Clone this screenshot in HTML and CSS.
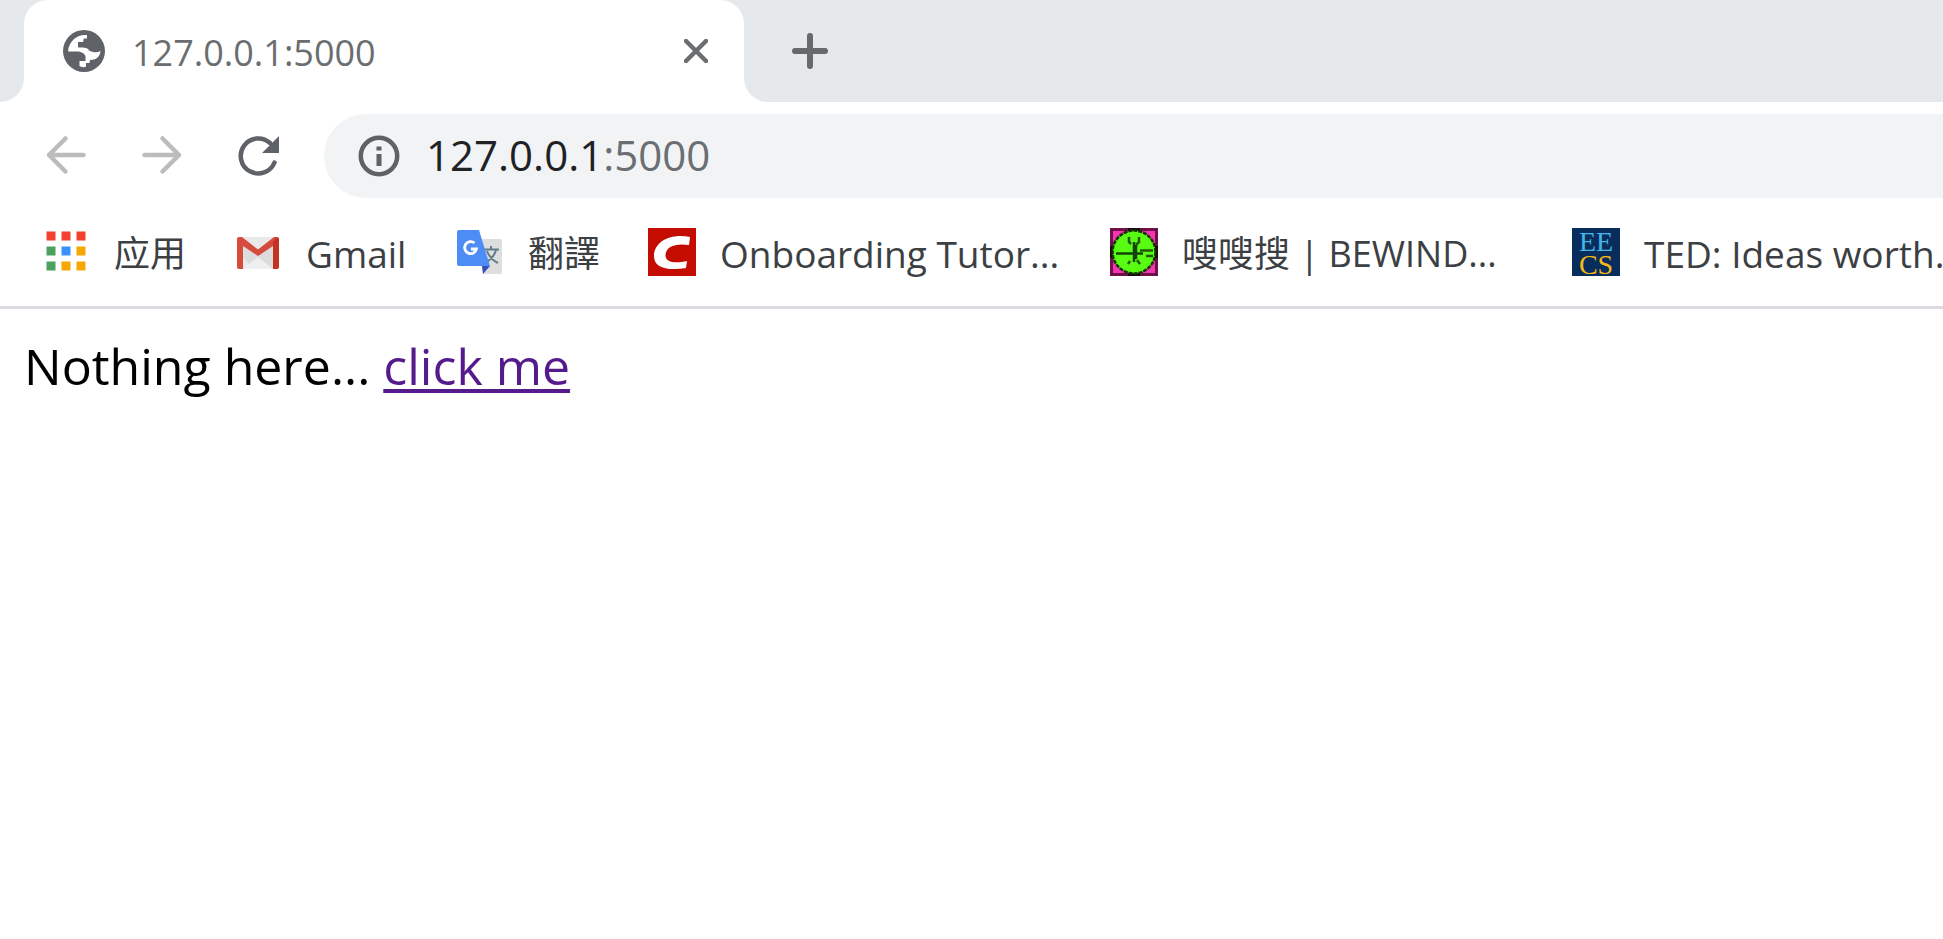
FILE: index.html
```html
<!DOCTYPE html>
<html lang="zh">
<head>
<meta charset="utf-8">
<title>127.0.0.1:5000</title>
<link rel="stylesheet" href="styles.css">
</head>
<body>
<header class="browser">
  <div class="tabstrip">
    <div class="strip-edge"></div>
    <div class="tab">
      <svg class="tab-icon" viewBox="0 0 42 42" aria-hidden="true">
        <circle cx="21" cy="21" r="21" fill="#5f6368"/>
        <path d="M24 5C15 4 6 10 5 21.500H14C19 21.500 22 24 22.500 26.500V31H16.500V36C18 37.500 22 37.500 23 36.500V33H25.500C27 33 27 31 27 30C33 30 37 27 37.500 21C34 23 30 22.500 26 20.500C25.500 18 22 17.500 15 17.500V12H19.500C21 12 20 9 21 8.500H24Z" fill="#fff"/>
      </svg>
      <span class="tab-title">127.0.0.1:5000</span>
      <button class="icon-button" aria-label="Close tab">
        <svg class="close-icon" viewBox="0 0 24 24"><path d="M2 2 22 22M22 2 2 22" stroke="#6b6e70" stroke-width="4.5" stroke-linecap="round"/></svg>
      </button>
    </div>
    <div class="strip-rest">
      <button class="icon-button" aria-label="New tab">
        <svg class="plus-icon" viewBox="0 0 36 36"><path d="M18 3V33M3 18H33" stroke="#666a6d" stroke-width="6" stroke-linecap="round"/></svg>
      </button>
    </div>
  </div>

  <div class="toolbar">
    <nav class="nav-buttons">
      <button class="icon-button" aria-label="Back" disabled>
        <svg class="nav-icon" viewBox="0 0 42 42"><path d="M38.500 20H4M20.500 3.500 4 20 20.500 36.500" fill="none" stroke="#babcbe" stroke-width="4.500" stroke-linecap="round" stroke-linejoin="round"/></svg>
      </button>
      <button class="icon-button" aria-label="Forward" disabled>
        <svg class="nav-icon" viewBox="0 0 42 42"><path d="M3.500 20H38M21.500 3.500 38 20 21.500 36.500" fill="none" stroke="#babcbe" stroke-width="4.500" stroke-linecap="round" stroke-linejoin="round"/></svg>
      </button>
      <button class="icon-button" aria-label="Reload">
        <svg class="nav-icon" viewBox="0 0 42 42"><path d="M37.500 27.500A17.500 17.500 0 1 1 33 8" fill="none" stroke="#5f6368" stroke-width="4.500" stroke-linecap="round"/><path d="M42 1V18H25Z" fill="#5f6368"/></svg>
      </button>
    </nav>
    <div class="omnibox">
      <button class="icon-button" aria-label="Site information">
        <svg class="info-icon" viewBox="0 0 42 42"><circle cx="21" cy="21" r="18.200" fill="none" stroke="#5f6163" stroke-width="4.500"/><path d="M18.500 11.500h5v4h-5zM18.500 19h5v12h-5z" fill="#5f6163"/></svg>
      </button>
      <div class="address" role="textbox" aria-label="Address" contenteditable="true" spellcheck="false">127.0.0.1<span class="port">:5000</span></div>
    </div>
  </div>

  <nav class="bookmarks" aria-label="Bookmarks">
    <a class="bookmark" href="#apps">
      <svg class="favicon" viewBox="0 0 48 48">
        <path d="M4.500 3.500h9v9h-9zM19.500 3.500h9v9h-9zM34.500 3.500h9v9h-9z" fill="#f4402f"/>
        <path d="M4.500 18.500h9v9h-9zM4.500 33.500h9v9h-9z" fill="#4aa25e"/>
        <path d="M19.500 18.500h9v9h-9z" fill="#3b92fb"/>
        <path d="M34.500 18.500h9v9h-9zM19.500 33.500h9v9h-9zM34.500 33.500h9v9h-9z" fill="#f6a704"/>
      </svg>
      <span class="label">应用</span>
    </a>
    <a class="bookmark" href="#gmail">
      <svg class="favicon" viewBox="0 0 48 48">
        <path d="M5 9H43V41H5Z" fill="#e9e9e9"/>
        <path d="M9 15 24 28 39 15V41H20L9 29Z" fill="#dcdcdc"/>
        <path d="M9 41 24 29 39 41Z" fill="#efefef"/>
        <path d="M5 9H8L24 21.500 40 9H43L39 18 24 28 9 18Z" fill="#d54b3d"/>
        <path d="M3 11Q3 9 5 9L9 14V41H5Q3 41 3 39Z" fill="#d54b3d"/>
        <path d="M45 11Q45 9 43 9L39 14V41H43Q45 41 45 39Z" fill="#c23321"/>
      </svg>
      <span class="label label-latin label-medium">Gmail</span>
    </a>
    <a class="bookmark" href="#translate">
      <svg class="favicon" viewBox="0 0 48 48">
        <path d="M20 11H44Q46 11 46 13V44Q46 46 44 46H27Z" fill="#dedede"/>
        <path d="M28 21.500H43M35 18V22M31 23Q34 31 42 35M40 22Q38 30 29 35" fill="none" stroke="#607d8b" stroke-width="2"/>
        <path d="M26 38H34L27 46Z" fill="#3650b8"/>
        <path d="M3 2H23L34 38H3Q1 38 1 36V4Q1 2 3 2Z" fill="#4d8df5"/>
        <path d="M18.500 15A6 6 0 1 0 20.500 21H15" fill="none" stroke="#fff" stroke-width="2.800"/>
      </svg>
      <span class="label">翻譯</span>
    </a>
    <a class="bookmark" href="#onboarding">
      <svg class="favicon" viewBox="0 0 48 48">
        <path d="M0 0H48V48H0Z" fill="#c40d00"/>
        <path d="M42 9 41 17C28 15 18 18 17.500 27C17 34 27 36 39 33L38 40C19 43 6 40 6 28C6 14 22 5 42 9Z" fill="#fff"/>
      </svg>
      <span class="label label-latin label-wide">Onboarding Tutor...</span>
    </a>
    <a class="bookmark" href="#bewindow">
      <svg class="favicon" viewBox="0 0 48 48">
        <path d="M0 0H48V48H0Z" fill="#701047"/>
        <path d="M3 3H45V45H3Z" fill="#f335b3"/>
        <path d="M18 0H30V3H18ZM18 45H30V48H18ZM0 18H3V30H0ZM45 18H48V30H45Z" fill="#170810"/>
        <circle cx="24" cy="24" r="21.500" fill="#58fc12" stroke="#153005" stroke-width="2.500" stroke-dasharray="4 1"/>
        <path d="M6 25.500H33M24 14V34M26 17V31" stroke="#124205" stroke-width="2.500"/>
        <path d="M30 22.500H43M36 28H43M19 9V14L21 16M29 9V14L26 17M20 33 18 36M27 32 30 36" fill="none" stroke="#20570a" stroke-width="2.500"/>
      </svg>
      <span class="label label-wide">嗖嗖搜 | BEWIND...</span>
    </a>
    <a class="bookmark" href="#ted">
      <svg class="favicon" viewBox="0 0 48 48">
        <path d="M0 0H48V48H0Z" fill="#082d5c"/>
        <text x="24" y="23" class="logo-text" fill="#42b4e8">EE</text>
        <text x="24" y="46" class="logo-text" fill="#f6b916">CS</text>
      </svg>
      <span class="label label-latin label-wide">TED: Ideas worth...</span>
    </a>
  </nav>
</header>
<main class="page">Nothing here... <a class="page-link" href="#click">click me</a></main>
</body>
</html>
```
FILE: styles.css
```css
* {
  box-sizing: border-box;
}

body {
  margin: 0;
  overflow-x: hidden;
  background: #fff;
  font-family: "Open Sans", "Noto Sans CJK SC", sans-serif;
}

svg {
  display: block;
}

.icon-button {
  flex: none;
  padding: 0;
  border: 0;
  background: none;
}

.tabstrip {
  display: flex;
  height: 102px;
  background: linear-gradient(#e5e9ec 50%, #fff 50%);
}

.strip-edge {
  width: 24px;
  background: #e5e9ec;
  border-bottom-right-radius: 24px;
}

.tab {
  display: flex;
  align-items: center;
  width: 720px;
  padding: 0 36px 0 39px;
  background: #fff;
  border-radius: 24px 24px 0 0;
}

.tab-icon {
  width: 42px;
  height: 42px;
}

.tab-title {
  flex: 1;
  margin-left: 27px;
  padding-top: 3px;
  color: #6b6e70;
  font-size: 36px;
  line-height: 48px;
}

.close-icon {
  width: 24px;
  height: 24px;
}

.strip-rest {
  display: flex;
  flex: 1;
  align-items: center;
  padding-left: 48px;
  background: #e5e9ec;
  border-bottom-left-radius: 24px;
}

.plus-icon {
  width: 36px;
  height: 36px;
}

.toolbar {
  display: flex;
  align-items: center;
  padding: 12px 0 6px 45px;
}

.nav-buttons {
  display: flex;
  gap: 54px;
}

.nav-icon,
.info-icon {
  width: 42px;
  height: 42px;
}

.omnibox {
  display: flex;
  flex: 1;
  align-items: center;
  height: 84px;
  margin-left: 45px;
  padding-left: 34px;
  background: #f1f3f4;
  border-radius: 42px 0 0 42px;
}

.address {
  flex: 1;
  margin-left: 26px;
  padding-bottom: 3px;
  color: #202124;
  font-size: 42px;
  line-height: 60px;
  outline: none;
}

.port {
  color: #6b6e70;
}

.bookmarks {
  display: flex;
  gap: 48px;
  align-items: center;
  height: 105px;
  padding: 0 0 6px 42px;
  overflow: hidden;
  border-bottom: 3px solid #dadce0;
}

.bookmark {
  display: flex;
  flex: none;
  gap: 24px;
  align-items: center;
  color: #3c4043;
  font-size: 36px;
  line-height: 48px;
  text-decoration: none;
  white-space: nowrap;
}

.favicon {
  width: 48px;
  height: 48px;
  overflow: visible;
}

.label {
  padding-top: 3px;
}

.label-latin {
  font-size: 37px;
}

.label-medium {
  width: 102px;
}

.label-wide {
  width: 342px;
}

.logo-text {
  font-family: "Liberation Serif", serif;
  font-size: 28px;
  text-anchor: middle;
}

.page {
  padding: 24px;
  color: #000;
  font-size: 50px;
  line-height: 66px;
}

.page-link {
  color: #551a8b;
  text-decoration-thickness: 4px;
  text-underline-offset: 4px;
}
```
